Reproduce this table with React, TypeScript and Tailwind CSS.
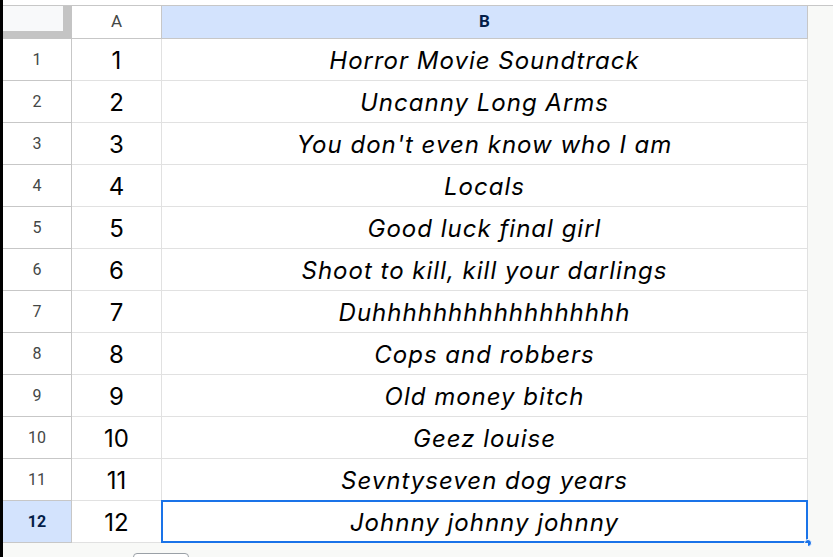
const rows = [
  'Horror Movie Soundtrack',
  'Uncanny Long Arms',
  "You don't even know who I am",
  'Locals',
  'Good luck final girl',
  'Shoot to kill, kill your darlings',
  'Duhhhhhhhhhhhhhhhhh',
  'Cops and robbers',
  'Old money bitch',
  'Geez louise',
  'Sevntyseven dog years',
  'Johnny johnny johnny',
];

const ui = { fontFamily: 'Roboto, "Liberation Sans", sans-serif' };
const cell = { fontFamily: 'Inter, "Open Sans", sans-serif' };

export default function App() {
  return (
    <div className="w-[833px] h-[557px] overflow-hidden flex bg-white">
      {/* window edge */}
      <div className="w-[3px] h-full bg-black shrink-0" />

      <div className="flex-1 flex flex-col">
        <div className="h-[5px] bg-white shrink-0" />
        <div className="h-px bg-[#c7c7c7] shrink-0" />

        <div className="flex flex-1">
          {/* grid */}
          <div className="flex flex-col w-[805px] shrink-0">
            {/* header row */}
            <div className="flex h-[33px]" style={ui}>
              <div className="w-[69px] h-full bg-[#f8f9fa] border-r-[9px] border-b-[8px] border-[#c4c4c4]" />
              <div className="w-[90px] h-full border-r border-b border-[#c7c7c7] flex items-center justify-center text-[17px] text-[#444746]">
                A
              </div>
              <div className="w-[646px] h-full bg-[#d3e3fd] border-r border-b border-[#c7c7c7] flex items-center justify-center text-[17px] font-bold text-[#041e49]">
                B
              </div>
            </div>

            {rows.map((title, i) => {
              const n = i + 1;
              const selected = n === 12;
              return (
                <div key={n} className="flex h-[42px]">
                  <div
                    style={ui}
                    className={
                      selected
                        ? 'w-[69px] h-full bg-[#d3e3fd] border-r border-b border-[#c7c7c7] flex items-center justify-center text-[16px] font-bold text-[#041e49]'
                        : 'w-[69px] h-full bg-white border-r border-b border-[#c7c7c7] flex items-center justify-center text-[16px] text-[#444746]'
                    }
                  >
                    {n}
                  </div>
                  <div
                    style={cell}
                    className="w-[90px] h-full pt-[3px] border-r border-b border-[#e1e1e1] flex items-center justify-center text-[24px] text-black"
                  >
                    {n}
                  </div>
                  <div
                    style={cell}
                    className={
                      selected
                        ? 'relative w-[646px] h-full pt-[3px] border-r border-b border-[#e1e1e1] flex items-center justify-center text-[24px] tracking-[1px] italic text-black'
                        : 'w-[646px] h-full pt-[3px] border-r border-b border-[#e1e1e1] flex items-center justify-center text-[24px] tracking-[1px] italic text-black'
                    }
                  >
                    {title}
                    {selected && (
                      <>
                        <div className="absolute -left-px -top-px -right-px -bottom-px border-2 border-[#1a73e8]" />
                        <div className="absolute -right-[5px] -bottom-[5px] w-[8px] h-[8px] rounded-full bg-[#1a73e8] border border-white" />
                      </>
                    )}
                  </div>
                </div>
              );
            })}

            {/* bottom bar */}
            <div className="flex-1 bg-[#f8f9f7] relative overflow-hidden">
              <div className="absolute left-[130px] top-[10px] w-[56px] h-[24px] rounded border border-[#9aa0a6] bg-white" />
            </div>
          </div>

          {/* off-grid area */}
          <div className="flex-1 bg-[#f8f9f7]" />
        </div>
      </div>
    </div>
  );
}
